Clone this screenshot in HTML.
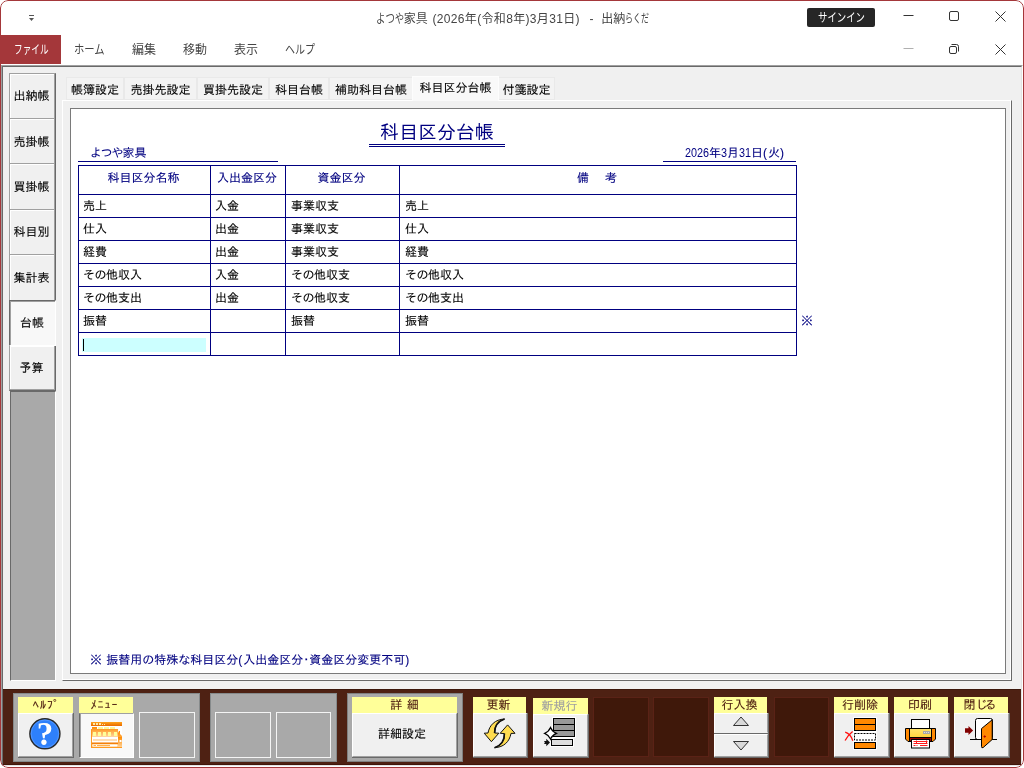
<!DOCTYPE html>
<html lang="ja">
<head>
<meta charset="utf-8">
<title>出納らくだ</title>
<style>
html,body{margin:0;padding:0;background:#fff;}
body{width:1024px;height:768px;position:relative;overflow:hidden;font-family:"Liberation Sans","IPAGothic",sans-serif;font-size:12px;line-height:12px;color:#000;}
.a{position:absolute;box-sizing:border-box;}
.ui{font-family:"Liberation Sans","Noto Sans CJK JP",sans-serif;color:#444;white-space:nowrap;font-size:12px;line-height:14px;}
.g{font-family:"Liberation Sans","IPAGothic",sans-serif;font-size:12px;line-height:12px;white-space:nowrap;-webkit-text-stroke:0.1px currentColor;}
.nk{display:inline-block;transform-origin:0 50%;white-space:nowrap;}
.navy{color:#000080;}
b.n{font-weight:normal;font-size:13px;display:inline-block;transform:scaleX(0.83);transform-origin:0 50%;-webkit-text-stroke:0;}
b.p{font-weight:normal;letter-spacing:1px;}
b.k{font-weight:normal;letter-spacing:-0.5px;}
.c{text-align:center;}
#win{will-change:transform;left:0;top:0;width:1024px;height:768px;border-radius:8px;background:#fff;overflow:hidden;}
#frame{left:0;top:0;width:1024px;height:768px;border:1px solid #a4373a;border-radius:8px;}
.sb{left:9px;width:47px;background:#f0f0f0;border-top:1px solid #a0a0a0;border-left:1px solid #a0a0a0;border-right:1px solid #696969;border-bottom:1px solid #696969;}
.sb i{position:absolute;left:0;top:0;right:0;bottom:0;border-top:1px solid #fff;border-left:1px solid #fff;border-right:1px solid #a0a0a0;border-bottom:1px solid #a0a0a0;}
.sb span{position:absolute;left:0;right:0;text-align:center;}
.tab{top:77px;height:23px;background:#f3f3f3;border:1px solid #e9e9e9;}
.tab span{position:absolute;left:0;right:0;top:6px;text-align:center;}
.hl{height:1px;background:#000080;}
.vl{width:1px;background:#000080;}
.pan{background:#a9a9a9;border:1px solid #868a8b;}
.lab{background:#ffff99;color:#4f2012;text-align:center;}
.lab span{position:absolute;left:-2px;right:0;top:2px;}
.btn{background:#f0f0f0;border-right:1px solid #696969;border-bottom:1px solid #696969;}
.btn i{position:absolute;left:0;top:0;right:0;bottom:0;border-right:1px solid #a0a0a0;border-bottom:1px solid #a0a0a0;border-top:1px solid #fff;border-left:1px solid #fff;}
.ebox{border:1px solid #f4f4f4;}
.dbox{background:#3f180a;border:1px solid #5a2216;}
svg{position:absolute;overflow:visible;}
</style>
</head>
<body>
<div id="win" class="a">

<div class="a ui" style="left:375.5px;top:12px;" id="t1"><span class="nk" style="width:28.2px;transform:scaleX(0.7833)">よつや</span>家具</div>
<div class="a ui" style="left:432.5px;top:12px;letter-spacing:0.33px;" id="t2">(2026年(令和8年)3月31日)</div>
<div class="a ui" style="left:589.5px;top:12px;" id="t3">-</div>
<div class="a ui" style="left:601.2px;top:12px;" id="t4">出納<span class="nk" style="width:24px;transform:scaleX(0.6667)">らくだ</span></div>
<svg class="a" style="left:0;top:0" width="60" height="30" viewBox="0 0 60 30"><rect x="29" y="15" width="5" height="1" fill="#555"/><path d="M29 18h5l-2.500 3z" fill="#555"/></svg>
<div class="a" style="left:807px;top:8px;width:68px;height:19px;background:#262626;border-radius:2px;"></div>
<div class="a ui" style="left:817.5px;top:11px;color:#fff;" id="signin"><span class="nk" style="width:47px;transform:scaleX(0.7833)">サインイン</span></div>
<svg class="a" style="left:896px;top:6px" width="120" height="60" viewBox="0 0 120 60" fill="none" stroke="#333" stroke-width="1">
 <path d="M7.500 9.500h10"/>
 <rect x="53.5" y="5.500" width="9" height="9" rx="1.500"/>
 <path d="M99.500 5.500l10 10M109.500 5.500l-10 10"/>
 <path d="M7.500 42.500h10" stroke="#b0b0b0"/>
 <rect x="53.500" y="40.500" width="7" height="7" rx="1.500"/>
 <path d="M55.500 38.500h5a2 2 0 0 1 2 2v5"/>
 <path d="M99.500 38.500l10 10M109.500 38.500l-10 10"/>
</svg>
<div class="a" style="left:0;top:35px;width:61px;height:29px;background:#a4373a;"></div>
<div class="a ui" style="left:13.5px;top:43px;color:#fff;" id="rt0"><span class="nk" style="width:34.5px;transform:scaleX(0.7188)">ファイル</span></div>
<div class="a ui" style="left:74.3px;top:43px;" id="rt1"><span class="nk" style="width:31px;transform:scaleX(0.8611)">ホーム</span></div>
<div class="a ui" style="left:132px;top:43px;" id="rt2">編集</div>
<div class="a ui" style="left:183px;top:43px;" id="rt3">移動</div>
<div class="a ui" style="left:234px;top:43px;" id="rt4">表示</div>
<div class="a ui" style="left:284.5px;top:43px;" id="rt5"><span class="nk" style="width:30px;transform:scaleX(0.8333)">ヘルプ</span></div>
<div class="a" style="left:1px;top:65px;width:1022px;height:702px;background:#f0f0f0;border-top:1px solid #a0a0a0;border-left:1px solid #a0a0a0;border-right:1px solid #fff;border-bottom:1px solid #fff;"></div>
<div class="a" style="left:2px;top:66px;width:1020px;height:700px;border-top:1px solid #696969;border-left:1px solid #696969;border-right:1px solid #e3e3e3;border-bottom:1px solid #e3e3e3;"></div>
<div class="a" style="left:9px;top:73px;width:47px;height:318px;background:#f0f0f0;border-left:1px solid #a0a0a0;border-right:1px solid #696969;border-top:1px solid #a0a0a0;border-bottom:1px solid #696969;"></div>
<div class="a" style="left:10px;top:74px;width:45px;height:316px;border-left:1px solid #fff;border-right:1px solid #a0a0a0;"></div>
<div class="a" style="left:10px;top:74px;width:44px;height:1px;background:#fff;"></div>
<div class="a" style="left:10px;top:118px;width:45px;height:1px;background:#a0a0a0;"></div>
<div class="a g c" style="left:8px;width:47px;top:90px;">出納帳</div>
<div class="a" style="left:10px;top:119px;width:44px;height:1px;background:#fff;"></div>
<div class="a" style="left:10px;top:163px;width:45px;height:1px;background:#a0a0a0;"></div>
<div class="a g c" style="left:8px;width:47px;top:136px;">売掛帳</div>
<div class="a" style="left:10px;top:164px;width:44px;height:1px;background:#fff;"></div>
<div class="a" style="left:10px;top:209px;width:45px;height:1px;background:#a0a0a0;"></div>
<div class="a g c" style="left:8px;width:47px;top:181px;">買掛帳</div>
<div class="a" style="left:10px;top:210px;width:44px;height:1px;background:#fff;"></div>
<div class="a" style="left:10px;top:254px;width:45px;height:1px;background:#a0a0a0;"></div>
<div class="a g c" style="left:8px;width:47px;top:226px;">科目別</div>
<div class="a" style="left:10px;top:255px;width:44px;height:1px;background:#fff;"></div>
<div class="a" style="left:10px;top:300px;width:45px;height:1px;background:#a0a0a0;"></div>
<div class="a g c" style="left:8px;width:47px;top:272px;">集計表</div>
<div class="a" style="left:9px;top:300px;width:47px;height:46px;background:#f8f8f8;border-left:1px solid #696969;border-top:1px solid #696969;border-right:1px solid #fff;border-bottom:1px solid #fff;"></div>
<div class="a" style="left:10px;top:301px;width:45px;height:44px;border-left:1px solid #a0a0a0;border-top:1px solid #a0a0a0;"></div>
<div class="a g c" style="left:9px;width:46px;top:317px;">台帳</div>
<div class="a" style="left:10px;top:346px;width:44px;height:1px;background:#fff;"></div>
<div class="a" style="left:10px;top:389px;width:45px;height:1px;background:#a0a0a0;"></div>
<div class="a g c" style="left:8px;width:47px;top:362px;">予算</div>
<div class="a" style="left:10px;top:391px;width:46px;height:290px;background:#a9a9a9;border-left:1px solid #696969;border-top:1px solid #696969;border-right:1px solid #fff;border-bottom:1px solid #fff;"></div>
<div class="a" style="left:62px;top:100px;width:950px;height:581px;border-top:1px solid #fff;border-left:1px solid #fff;border-right:1px solid #696969;border-bottom:1px solid #696969;"></div>
<div class="a" style="left:63px;top:101px;width:948px;height:579px;border-right:1px solid #fff;border-bottom:1px solid #fff;"></div>
<div class="a tab" style="left:66px;width:58px;"><span class="g">帳簿設定</span></div>
<div class="a tab" style="left:124px;width:73px;"><span class="g">売掛先設定</span></div>
<div class="a tab" style="left:197px;width:72px;"><span class="g">買掛先設定</span></div>
<div class="a tab" style="left:269px;width:60px;"><span class="g">科目台帳</span></div>
<div class="a tab" style="left:329px;width:84px;"><span class="g">補助科目台帳</span></div>
<div class="a tab" style="left:498px;width:57px;"><span class="g">付箋設定</span></div>
<div class="a tab" style="left:412px;width:87px;top:76px;height:25px;background:#f9f9f9;border-color:#fdfdfd;border-bottom:none;"><span class="g" style="top:5px">科目区分台帳</span></div>
<div class="a" style="left:70px;top:108px;width:936px;height:566px;background:#fff;border:1px solid #7a7a7a;"></div>
<div class="a g navy" style="left:380px;top:123px;font-size:19px;line-height:19px;-webkit-text-stroke:0;" id="ptitle">科目区分台帳</div>
<div class="a hl" style="left:369px;top:144px;width:136px;"></div>
<div class="a hl" style="left:369px;top:146px;width:136px;"></div>
<div class="a g navy" style="left:90px;top:147px;" id="co"><span style="letter-spacing:-1.2px">よつや</span>家具</div>
<div class="a hl" style="left:78px;top:161px;width:200px;"></div>
<div class="a g navy" style="left:685px;top:147px;" id="date"><b class="n" style="width:24px">2026</b>年<b class="n" style="width:6px">3</b>月<b class="n" style="width:12px">31</b>日<b class="p">(</b>火<b class="p">)</b></div>
<div class="a hl" style="left:663px;top:161px;width:133px;"></div>
<div class="a hl" style="left:78px;top:165px;width:719px;"></div>
<div class="a hl" style="left:78px;top:194px;width:719px;"></div>
<div class="a hl" style="left:78px;top:217px;width:719px;"></div>
<div class="a hl" style="left:78px;top:240px;width:719px;"></div>
<div class="a hl" style="left:78px;top:263px;width:719px;"></div>
<div class="a hl" style="left:78px;top:286px;width:719px;"></div>
<div class="a hl" style="left:78px;top:309px;width:719px;"></div>
<div class="a hl" style="left:78px;top:332px;width:719px;"></div>
<div class="a hl" style="left:78px;top:355px;width:719px;"></div>
<div class="a vl" style="left:78px;top:165px;height:191px;"></div>
<div class="a vl" style="left:210px;top:165px;height:191px;"></div>
<div class="a vl" style="left:285px;top:165px;height:191px;"></div>
<div class="a vl" style="left:399px;top:165px;height:191px;"></div>
<div class="a vl" style="left:796px;top:165px;height:191px;"></div>
<div class="a g navy c" style="left:78px;width:131px;top:172px;">科目区分名称</div>
<div class="a g navy c" style="left:210px;width:74px;top:172px;">入出金区分</div>
<div class="a g navy c" style="left:285px;width:113px;top:172px;">資金区分</div>
<div class="a g navy c" style="left:399px;width:396px;top:172px;"><span style="letter-spacing:2px;padding-left:2px">備　考</span></div>
<div class="a g" style="left:83px;top:200px;">売上</div>
<div class="a g" style="left:215px;top:200px;">入金</div>
<div class="a g" style="left:291px;top:200px;">事業収支</div>
<div class="a g" style="left:405px;top:200px;">売上</div>
<div class="a g" style="left:83px;top:223px;">仕入</div>
<div class="a g" style="left:215px;top:223px;">出金</div>
<div class="a g" style="left:291px;top:223px;">事業収支</div>
<div class="a g" style="left:405px;top:223px;">仕入</div>
<div class="a g" style="left:83px;top:246px;">経費</div>
<div class="a g" style="left:215px;top:246px;">出金</div>
<div class="a g" style="left:291px;top:246px;">事業収支</div>
<div class="a g" style="left:405px;top:246px;">経費</div>
<div class="a g" style="left:83px;top:269px;"><b class="k">その</b>他収入</div>
<div class="a g" style="left:215px;top:269px;">入金</div>
<div class="a g" style="left:291px;top:269px;"><b class="k">その</b>他収支</div>
<div class="a g" style="left:405px;top:269px;"><b class="k">その</b>他収入</div>
<div class="a g" style="left:83px;top:292px;"><b class="k">その</b>他支出</div>
<div class="a g" style="left:215px;top:292px;">出金</div>
<div class="a g" style="left:291px;top:292px;"><b class="k">その</b>他収支</div>
<div class="a g" style="left:405px;top:292px;"><b class="k">その</b>他支出</div>
<div class="a g" style="left:83px;top:315px;">振替</div>
<div class="a g" style="left:291px;top:315px;">振替</div>
<div class="a g" style="left:405px;top:315px;">振替</div>
<div class="a" style="left:82px;top:338px;width:124px;height:14px;background:#ccffff;"></div>
<div class="a" style="left:83px;top:339px;width:1px;height:12px;background:#000;"></div>
<div class="a g navy" style="left:801px;top:315px;">※</div>
<div class="a g navy" style="left:90px;top:654px;word-spacing:1px" id="note">※ 振替用の特殊な科目区分<b class="p">(</b>入出金区分･資金区分変更不可<b class="p">)</b></div>
<div class="a" style="left:3px;top:689px;width:1018px;height:76px;background:#4e2113;border-top:1px solid #3c170b;border-bottom:1px solid #40160a;"></div>
<div class="a pan" style="left:13px;top:693px;width:187px;height:69px;"></div>
<div class="a pan" style="left:210px;top:693px;width:127px;height:69px;"></div>
<div class="a pan" style="left:347px;top:693px;width:116px;height:69px;border-color:#808080;"></div>
<div class="a btn" style="left:18px;top:713px;width:56px;height:45px;"><i></i><svg style="left:11px;top:5px" width="33" height="33" viewBox="0 0 33 33"><circle cx="15.900" cy="15.800" r="15" fill="#2e80fb" stroke="#2a2a2a" stroke-width="1.500"/><circle cx="15.900" cy="15.800" r="13.800" fill="none" stroke="#5a9cff" stroke-width="0.800"/><text x="15.900" y="26.700" text-anchor="middle" style="font-family:Liberation Serif,serif;font-weight:bold;font-size:33px" fill="#fff">?</text></svg></div>
<div class="a lab g" style="left:18px;top:697px;width:55px;height:16px;"><span><span style="position:static;letter-spacing:1.2px;margin-left:4px">ﾍﾙﾌﾟ</span></span></div>
<div class="a" style="left:79px;top:713px;width:55px;height:45px;background:#f8f8f8;border-left:1px solid #696969;border-top:1px solid #a0a0a0;border-right:1px solid #fff;border-bottom:1px solid #fff;"><i class="a" style="left:0;top:0;right:0;bottom:0;border-left:1px solid #a0a0a0;"></i></div>
<div class="a lab g" style="left:79px;top:697px;width:54px;height:16px;"><span style="letter-spacing:1px;left:-3px">ﾒﾆｭｰ</span></div>
<div class="a ebox" style="left:139px;top:712px;width:56px;height:46px;"></div>
<div class="a ebox" style="left:215px;top:712px;width:56px;height:46px;"></div>
<div class="a ebox" style="left:276px;top:712px;width:55px;height:46px;"></div>
<div class="a btn" style="left:352px;top:713px;width:106px;height:45px;"><i></i><span class="a g c" style="left:-5px;right:0;top:15px;">詳細設定</span></div>
<div class="a lab g" style="left:352px;top:697px;width:105px;height:16px;"><span style="word-spacing:1px;left:0">詳 細</span></div>
<div class="a btn" style="left:473px;top:713px;width:55px;height:45px;"><i></i></div>
<div class="a lab g" style="left:473px;top:697px;width:53px;height:16px;"><span>更新</span></div>
<div class="a btn" style="left:533px;top:714px;width:56px;height:44px;"><i></i></div>
<div class="a lab g" style="left:533px;top:698px;width:55px;height:16px;color:#a0a0a0;"><span>新規行</span></div>
<div class="a dbox" style="left:593px;top:697px;width:56px;height:60px;"></div>
<div class="a dbox" style="left:653px;top:697px;width:56px;height:60px;"></div>
<div class="a btn" style="left:714px;top:713px;width:55px;height:21px;"><i style="border-bottom-color:#f0f0f0"></i></div>
<div class="a btn" style="left:714px;top:734px;width:55px;height:24px;"><i></i></div>
<svg class="a" style="left:714px;top:713px" width="55" height="45" viewBox="0 0 55 45"><path d="M19.500 12.500h15l-7.500 -8.500z" fill="#d9d9d9" stroke="#333" stroke-width="1"/><path d="M19.500 28.500h15l-7.500 8.500z" fill="#d9d9d9" stroke="#333" stroke-width="1"/></svg>
<div class="a lab g" style="left:714px;top:697px;width:53px;height:16px;"><span>行入換</span></div>
<div class="a dbox" style="left:774px;top:697px;width:55px;height:60px;"></div>
<div class="a btn" style="left:834px;top:713px;width:56px;height:45px;"><i></i></div>
<div class="a lab g" style="left:834px;top:697px;width:54px;height:16px;"><span>行削除</span></div>
<div class="a btn" style="left:894px;top:713px;width:56px;height:45px;"><i></i></div>
<div class="a lab g" style="left:894px;top:697px;width:54px;height:16px;"><span>印刷</span></div>
<div class="a btn" style="left:954px;top:713px;width:56px;height:45px;"><i></i></div>
<div class="a lab g" style="left:954px;top:697px;width:54px;height:16px;"><span><span style="position:static;margin-left:-3px"></span>閉<span style="position:static;letter-spacing:-3px">じる</span></span></div>
<svg class="a" style="left:0;top:0" width="1024" height="768" viewBox="0 0 1024 768">
<defs>
<linearGradient id="gA" x1="0" y1="0" x2="0" y2="1"><stop offset="0" stop-color="#ffa31a"/><stop offset="1" stop-color="#e86a00"/></linearGradient>
<linearGradient id="gB" x1="0" y1="0" x2="0" y2="1"><stop offset="0" stop-color="#ff8a00"/><stop offset="1" stop-color="#ffd7a3"/></linearGradient>
<linearGradient id="gC" x1="0" y1="0" x2="0" y2="1"><stop offset="0" stop-color="#ff8a00"/><stop offset="0.500" stop-color="#ffc27a"/><stop offset="1" stop-color="#ff8a00"/></linearGradient>
<linearGradient id="gY" x1="0" y1="0" x2="0" y2="1"><stop offset="0" stop-color="#ffe36b"/><stop offset="1" stop-color="#ffd23e"/></linearGradient>
</defs>
<!-- menu icon -->
<g id="icomenu">
<rect x="91" y="722" width="31" height="4" fill="url(#gA)"/>
<rect x="93" y="723" width="2" height="2" fill="#ffe9a8"/><rect x="96" y="723" width="2" height="2" fill="#ffe9a8"/><rect x="99" y="723" width="2" height="2" fill="#ffe9a8"/><rect x="102" y="724" width="1" height="1" fill="#ffe9a8"/><rect x="104" y="724" width="1" height="1" fill="#ffe9a8"/>
<rect x="91" y="726" width="31" height="22" fill="#fff"/>
<rect x="98" y="727" width="5" height="2" fill="#fff59a"/><rect x="104" y="727" width="5" height="2" fill="#fff59a"/><rect x="110" y="727" width="5" height="2" fill="#fff59a"/>
<path d="M92 727h5v2h21v8h-26z" fill="url(#gB)"/>
<rect x="93" y="732" width="3" height="4" fill="#ffff99"/><rect x="98" y="732" width="3" height="4" fill="#ffff99"/><rect x="103" y="732" width="3" height="4" fill="#ffff99"/><rect x="108" y="732" width="3" height="4" fill="#ffff99"/><rect x="114" y="732" width="3" height="4" fill="#ffff99"/>
<rect x="91" y="729" width="1" height="19" fill="#ff9a1f"/>
<rect x="93" y="739" width="24" height="2" fill="#ffddb3"/>
<rect x="92" y="742.500" width="26" height="1.500" fill="#f07800"/>
<rect x="92" y="744" width="26" height="3" fill="#fff" stroke="#ff9a1f" stroke-width="0.600"/>
<rect x="93.500" y="745" width="2.500" height="1" fill="#ffb04d"/><rect x="97" y="745" width="13" height="1" fill="#ffb04d"/>
<path d="M118 733l1 -2h1v3l2 2v12h-31v-1h27z" fill="url(#gB)"/>
<rect x="118" y="737" width="4" height="11" fill="url(#gB)"/>
<rect x="91" y="747" width="31" height="1" fill="#ff9a1f"/>
<rect x="119.500" y="740" width="2" height="2" fill="#fff"/>
</g>
<!-- update icon -->
<g stroke="#111" stroke-width="1" stroke-linejoin="miter" fill="#ffdc50">
<path d="M504.500 719 C495 719.500 489.500 725 488 733 L484.200 733.200 L491.400 741.700 L498.800 733.200 L494.600 733 C494.400 726.500 497.500 721.500 504.500 719z"/>
<path d="M494.600 747.700 C504 747.200 509.500 741.700 511 733.400 L515 733.300 L507.600 724.900 L500.200 733.300 L504.400 733.600 C504.600 740.200 501.500 745.200 494.600 747.700z"/>
<path d="M494.600 733 C494.400 726.500 497.500 721.500 504.500 719" fill="none" stroke-width="1.700"/>
<path d="M504.400 733.600 C504.600 740.200 501.500 745.200 494.600 747.700" fill="none" stroke-width="1.700"/>
</g>
<!-- new row icon -->
<g>
<rect x="552" y="717" width="24" height="21" fill="#fff"/>
<rect x="553.500" y="718.500" width="21" height="18" fill="#999" stroke="#000" stroke-width="1"/>
<rect x="553" y="724" width="22" height="1" fill="#000"/><rect x="553" y="730" width="22" height="1" fill="#000"/>
<rect x="550" y="738" width="24" height="9" fill="#fff"/>
<rect x="551.500" y="739.500" width="21" height="6" fill="#ddd" stroke="#000" stroke-width="1"/>
<path d="M550.500 727.600 Q552.200 731.700 556.400 733.400 Q552.200 735.100 550.500 739.100 Q548.800 735.100 544.700 733.400 Q548.800 731.700 550.500 727.600z" fill="#fff" stroke="#000" stroke-width="1.200"/>
<path d="M544 741h2.300v-2.200l3.700 3.700l-3.700 3.700v-2.200h-2.300l0.900 -1.500z" fill="#111"/>
</g>
<!-- delete row icon -->
<g>
<rect x="853" y="717" width="24" height="33" fill="#fff" opacity="0.900"/>
<rect x="854.500" y="718.500" width="21" height="12" fill="#ff8800" stroke="#000" stroke-width="1"/>
<rect x="854" y="724" width="22" height="1" fill="#000"/>
<rect x="854.500" y="733.500" width="21" height="6.500" fill="#fff" stroke="#000" stroke-width="1" stroke-dasharray="2 1"/>
<rect x="854.500" y="742.500" width="21" height="6" fill="#ff8800" stroke="#000" stroke-width="1"/>
<path d="M845.200 732.200 C849 733.500 851.500 736.500 852.800 740.800 M852.600 731.600 C849 734.500 846.500 737.500 845.100 740.500" stroke="#ff1010" stroke-width="1.300" fill="none"/>
</g>
<!-- print icon -->
<g>
<rect x="911.500" y="719.500" width="18" height="10" fill="#fff" stroke="#000" stroke-width="1"/>
<path d="M905.500 728.500h30v10.500l-2.500 2.500h-25l-2.500 -2.500z" fill="#ff8800" stroke="#000" stroke-width="1"/>
<rect x="909.500" y="729" width="22" height="8.500" fill="url(#gY)" stroke="#000" stroke-width="0"/>
<rect x="909" y="729" width="1" height="12" fill="#000"/><rect x="931" y="729" width="1" height="12" fill="#000"/>
<rect x="910" y="737" width="21" height="1" fill="#000"/>
<rect x="910" y="738" width="21" height="3" fill="#990000"/>
<rect x="923" y="731" width="7" height="3" fill="#a8a8a8"/><rect x="924" y="732" width="1" height="1" fill="#e0e0e0"/><rect x="926" y="732" width="1" height="1" fill="#e0e0e0"/><rect x="928" y="732" width="1" height="1" fill="#e0e0e0"/>
<rect x="911.500" y="739.500" width="18" height="8.500" fill="#fff" stroke="#000" stroke-width="1"/>
<path d="M913.500 741.500h14M913.500 743.500h14M916.500 740.500v3M926.500 740.500v3M913.500 745.500h2M916.500 745.500h1M920 745.500h7.500" stroke="#ff1a1a" stroke-width="1" fill="none"/>
</g>
<!-- close icon -->
<g>
<rect x="975.500" y="718.500" width="17" height="21" rx="2" fill="#fff" stroke="#000" stroke-width="1"/>
<path d="M970 739.500h27" stroke="#000" stroke-width="1"/>
<path d="M992.200 719.800 L981.500 728.600 V746.500 Q981.500 748.500 983.200 747.500 L992.200 739.500z" fill="#ff8800" stroke="#000" stroke-width="1" stroke-linejoin="round"/>
<path d="M983.500 736.500h2.500M984.700 735.300v2.500" stroke="#b00000" stroke-width="0.900"/>
<path d="M965 728.200h3.500v-2.300l4.600 4.600l-4.600 4.600v-2.300h-3.500z" fill="#800000"/>
</g>
</svg>
<div id="frame" class="a"></div>
</div>
</body>
</html>
